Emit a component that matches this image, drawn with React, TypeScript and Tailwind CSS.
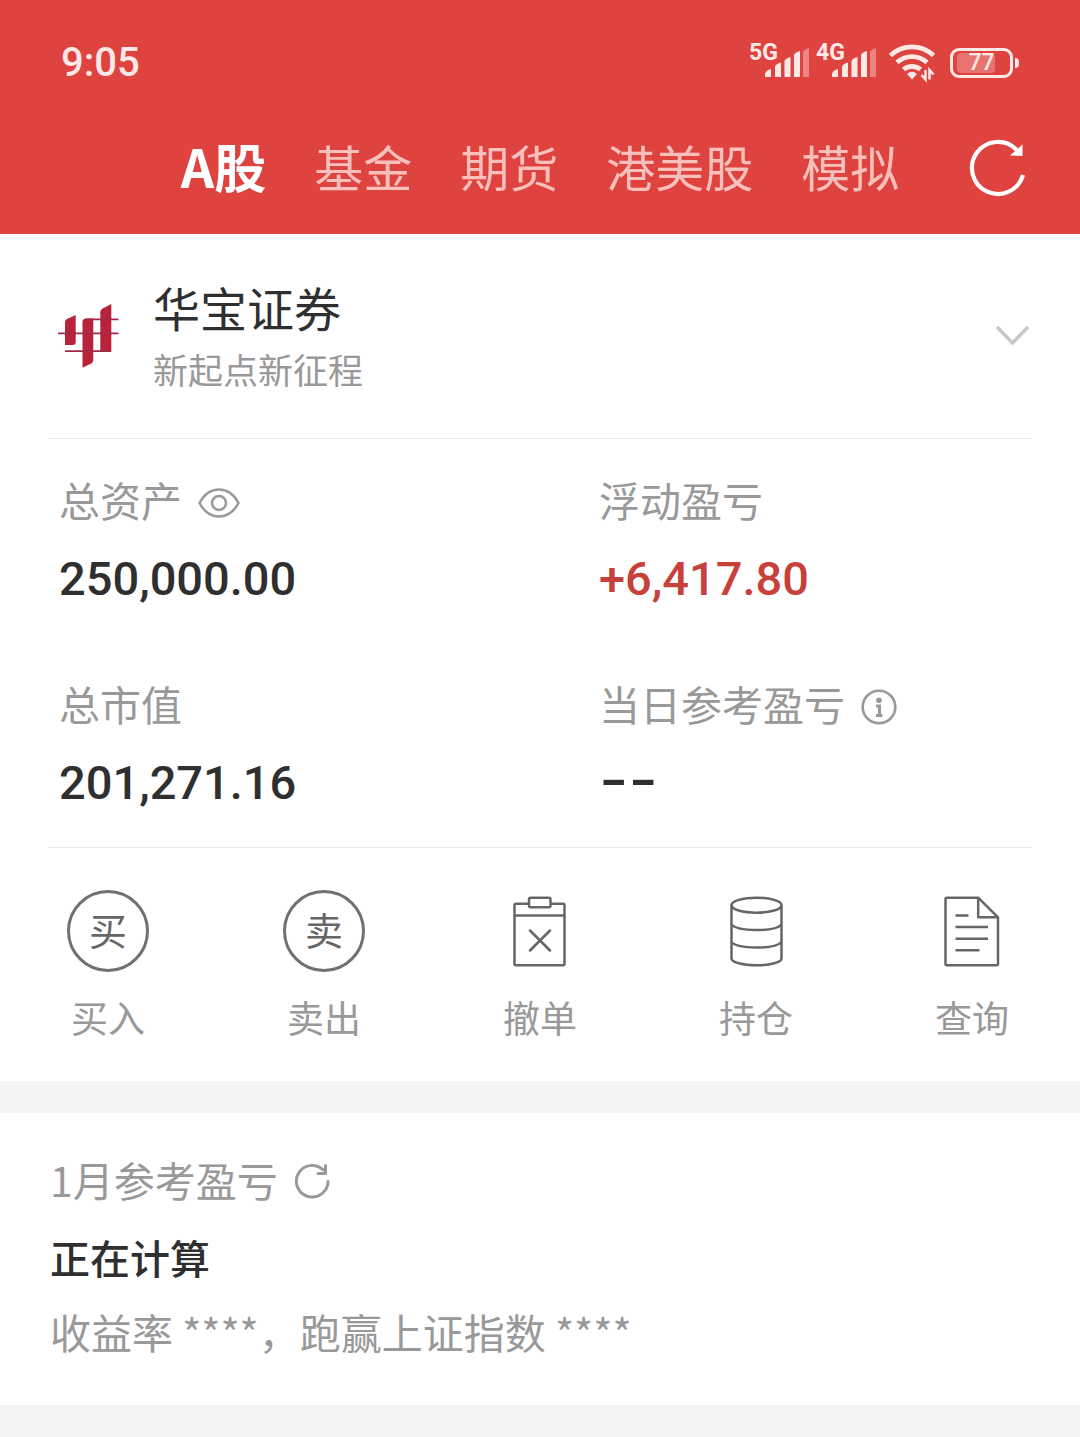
import type { ReactNode } from 'react';

interface TabItem {
  id: string;
  label: string;
}

interface StatProps {
  label: string;
  value: string;
  valueClass?: string;
  action?: ReactNode;
}

interface ActionItem {
  label: string;
  icon: ReactNode;
}

const tabs: TabItem[] = [
  { id: 'a', label: 'A股' },
  { id: 'fund', label: '基金' },
  { id: 'futures', label: '期货' },
  { id: 'hkus', label: '港美股' },
  { id: 'demo', label: '模拟' },
];

const actions: ActionItem[] = [
  { label: '买入', icon: <RoundGlyph char="买" /> },
  { label: '卖出', icon: <RoundGlyph char="卖" /> },
  { label: '撤单', icon: <ClipboardIcon /> },
  { label: '持仓', icon: <HoldingsIcon /> },
  { label: '查询', icon: <DocumentIcon /> },
];

function Signal({ network }: { network: string }) {
  return (
    <div className="relative h-10 w-[61px]">
      <span className="absolute top-0 left-0 font-['Roboto',sans-serif] text-[23px] leading-5 font-bold">
        {network}
      </span>
      <svg className="h-10 w-full" viewBox="0 0 61 40" fill="currentColor">
        <path d="M16 34v-2.500q0-4 6-5.500v8zM26 34V23.500q1-2.500 6-4V34zM35.500 34V18q1-2.500 6-4V34zM45 34V12q1-2.500 6-4V34z" />
        <path d="M54 34V9q1-2.500 6-4V34z" opacity="0.4" />
      </svg>
    </div>
  );
}

function WifiIcon() {
  return (
    <svg className="h-10 w-[47px]" viewBox="0 0 47 40" fill="none" stroke="currentColor" strokeWidth="4.600">
      <path d="M1.500 12.500a31 31 0 0 1 43 0" />
      <path d="M8 19.500a22 22 0 0 1 30 0" />
      <path d="M14.500 26.500a13 13 0 0 1 17 0" />
      <path d="M18 31q5-4.500 10 0l-5 5.500z" fill="currentColor" stroke="none" />
      <path d="M36.500 27v9.500l-4-4.500M40.500 36.500V27l4 4.500" strokeWidth="2.500" />
    </svg>
  );
}

function Battery({ level }: { level: number }) {
  return (
    <div className="flex items-center gap-0.5">
      <div className="relative flex h-[30px] w-[63px] items-center justify-center rounded-[9px] border-3 border-current">
        <div className="absolute inset-y-0.5 left-1 w-[38px] rounded-sm bg-white/25" />
        <span className="relative font-['Roboto',sans-serif] text-[23px] leading-6 font-medium">{level}</span>
      </div>
      <div className="h-[10px] w-1 rounded-r-full bg-current" />
    </div>
  );
}

function RefreshIcon() {
  return (
    <svg className="size-[60px]" viewBox="0 0 60 60" fill="none" stroke="currentColor" strokeWidth="4.200">
      <path d="M55 37A26 26 0 1 1 48.500 11.700" />
      <path d="M54.500 6.500V18l-12.500-.5z" fill="currentColor" stroke="none" />
    </svg>
  );
}

function SmallRefreshIcon() {
  return (
    <svg
      className="size-9"
      viewBox="0 0 36 36"
      fill="none"
      stroke="currentColor"
      strokeWidth="3"
      strokeLinecap="round"
      strokeLinejoin="round"
    >
      <path d="M34 18.500A15.800 15.800 0 1 1 29 6.700" />
      <path d="M31.500 2.500v8h-7.500" />
    </svg>
  );
}

function BrokerLogo() {
  return (
    <svg className="h-[66px] w-[62px]" viewBox="0 0 62 66" fill="#b8233a">
      <path d="M7 19q0-2 2-3l8.700-4V39q0 3-3 3H7z" />
      <path d="M24.500 19q0-3.500 3.500-3.500h7.300V57q0 2-2 3.500l-8.800 4.300z" />
      <path d="M42.300 9q0-2 2-3.200l9-4.800v48h-11z" />
      <path
        d="M27 16.400h33.500M0 30.400h60.500M7 48.200h46"
        fill="none"
        stroke="#a32a45"
        strokeWidth="1.800"
      />
    </svg>
  );
}

function EyeIcon() {
  return (
    <svg className="h-[30px] w-[42px]" viewBox="0 0 42 30" fill="none" stroke="currentColor" strokeWidth="2.500">
      <path d="M1.500 15C6 6.500 13 1.500 21 1.500S36 6.500 40.500 15C36 23.500 29 28.500 21 28.500S6 23.500 1.500 15z" />
      <circle cx="21" cy="15" r="7" />
    </svg>
  );
}

function InfoIcon() {
  return (
    <svg className="size-9" viewBox="0 0 36 36" fill="none" stroke="currentColor">
      <circle cx="18" cy="18" r="16.300" strokeWidth="2.600" />
      <circle cx="18" cy="11.300" r="2.800" fill="currentColor" stroke="none" />
      <path d="M15 17h3.500v9.500M15 26.500h6.500" strokeWidth="3" />
    </svg>
  );
}

function RoundGlyph({ char }: { char: string }) {
  return (
    <span className="flex size-[82px] items-center justify-center rounded-full border-3 border-[#707070] pb-1 text-[38px] leading-none">
      {char}
    </span>
  );
}

function ClipboardIcon() {
  return (
    <svg className="size-[84px]" viewBox="0 0 84 84" fill="none" stroke="currentColor" strokeWidth="2.500">
      <path d="M31 14.700H18q-1.500 0-1.500 1.500v58.600q0 1.500 1.500 1.500h47q1.500 0 1.500-1.500V16.200q0-1.500-1.500-1.500H52.500" />
      <rect x="31" y="8.700" width="21.500" height="9.500" rx="1.800" />
      <path d="M16.500 26.500h50" />
      <path d="M32 41.500l20 20M52 41.500l-20 20" strokeLinecap="round" />
    </svg>
  );
}

function HoldingsIcon() {
  return (
    <svg className="size-[84px]" viewBox="0 0 84 84" fill="none" stroke="currentColor" strokeWidth="2.500">
      <ellipse cx="42.500" cy="16.200" rx="25" ry="7.500" />
      <path d="M17.500 16.200v53.300c0 3.800 11 6.800 25 6.800s25-3 25-6.800V16.200" />
      <path d="M17.500 35.500c3 3.500 13 5.500 25 5.500s22-2 25-5.500" />
      <path d="M17.500 53c3 3.500 13 5.500 25 5.500s22-2 25-5.500" />
    </svg>
  );
}

function DocumentIcon() {
  return (
    <svg
      className="size-[84px]"
      viewBox="0 0 84 84"
      fill="none"
      stroke="currentColor"
      strokeWidth="2.500"
      strokeLinejoin="round"
    >
      <path d="M48.200 8.700H17q-1.500 0-1.500 1.500v64.600q0 1.500 1.500 1.500h49.500q1.500 0 1.500-1.500V28.300z" />
      <path d="M48.200 8.700v19.600H68" />
      <path d="M25.500 26.500h13M25.500 38h32.500M25.500 49.700h32.500M25.500 61.300h24" />
    </svg>
  );
}

function Stat({ label, value, valueClass = '', action }: StatProps) {
  return (
    <div className="px-[59px]">
      <div className="flex h-14 items-center gap-4 text-[41px] leading-[56px] text-[#999]">
        <span>{label}</span>
        {action}
      </div>
      <p className={`mt-5 h-16 ${valueClass}`}>{value}</p>
    </div>
  );
}

export default function App() {
  return (
    <main className="min-h-screen bg-[#f4f4f4] font-['Noto_Sans_CJK_SC',sans-serif] text-[#2f2f2f]">
      <header className="bg-[#df4340] pb-6 text-white">
        <div className="flex h-[126px] items-center justify-between px-[61px] text-[#ffe9e7]">
          <span className="font-['Roboto',sans-serif] text-[40px] leading-10 font-medium">9:05</span>
          <div className="flex items-center">
            <Signal network="5G" />
            <div className="ml-1.5">
              <Signal network="4G" />
            </div>
            <div className="ml-3">
              <WifiIcon />
            </div>
            <div className="ml-3.5">
              <Battery level={77} />
            </div>
          </div>
        </div>

        <div className="grid h-[84px] grid-cols-[1fr_auto_1fr] items-center">
          <nav className="col-start-2 flex gap-12 pb-1 leading-[64px] whitespace-nowrap">
            {tabs.map((tab) => (
              <button
                key={tab.id}
                type="button"
                className={
                  tab.id === 'a'
                    ? 'text-[52px] leading-[64px] font-bold text-white'
                    : 'text-[49px] leading-[64px] text-[#f9bfbb]'
                }
              >
                {tab.label}
              </button>
            ))}
          </nav>
          <button type="button" aria-label="刷新" className="mr-[52px] justify-self-end">
            <RefreshIcon />
          </button>
        </div>
      </header>

      <section className="bg-white">
        {/* Broker */}
        <div className="mx-12 flex h-[205px] items-center border-b border-[#ececec] pl-2.5">
          <BrokerLogo />
          <div className="ml-[33px] flex-1 pt-0.5">
            <h1 className="text-[47px] leading-[64px]">华宝证券</h1>
            <p className="text-[35px] leading-[60px] text-[#999]">新起点新征程</p>
          </div>
          <button type="button" aria-label="切换账户">
            <svg className="h-[22px] w-10" viewBox="0 0 40 22" fill="none" stroke="#c8c8c8" strokeWidth="3.500">
              <path d="M5 2l15.500 16L36 2" />
            </svg>
          </button>
        </div>

        {/* Account figures */}
        <div className="grid grid-cols-2 gap-y-16 py-8">
          <Stat
            label="总资产"
            value="250,000.00"
            valueClass="font-['Roboto',sans-serif] text-[47px] leading-[64px] font-medium"
            action={
              <button type="button" aria-label="隐藏金额" className="pt-2">
                <EyeIcon />
              </button>
            }
          />
          <Stat
            label="浮动盈亏"
            value="+6,417.80"
            valueClass="font-['Roboto',sans-serif] text-[47px] leading-[64px] font-medium text-[#c8403a]"
          />
          <Stat
            label="总市值"
            value="201,271.16"
            valueClass="font-['Roboto',sans-serif] text-[47px] leading-[64px] font-medium"
          />
          <Stat
            label="当日参考盈亏"
            value="--"
            valueClass="font-['Inter',sans-serif] text-[64px] leading-[56px]"
            action={
              <button type="button" aria-label="说明" className="pt-2">
                <InfoIcon />
              </button>
            }
          />
        </div>

        {/* Trade actions */}
        <div className="mx-12 border-t border-[#ececec]" />
        <div className="grid grid-cols-5 pt-[41px] pb-10">
          {actions.map((item) => (
            <button key={item.label} type="button" className="flex flex-col items-center text-[#666]">
              <span className="flex h-[84px] items-center">{item.icon}</span>
              <span className="mt-5 text-[37px] leading-[48px] text-[#999]">{item.label}</span>
            </button>
          ))}
        </div>
      </section>

      {/* Monthly result */}
      <section className="mt-8 bg-white px-[50px] pt-[38px] pb-[46px]">
        <div className="flex h-14 items-center gap-4 text-[41px] leading-[56px] text-[#999]">
          <h2>1月参考盈亏</h2>
          <button type="button" aria-label="重新计算" className="pt-1">
            <SmallRefreshIcon />
          </button>
        </div>
        <p className="mt-[22px] text-[40px] leading-[56px] font-medium">正在计算</p>
        <p className="mt-[18px] text-[41px] leading-[56px] text-[#999]">收益率 ****，跑赢上证指数 ****</p>
      </section>
    </main>
  );
}
